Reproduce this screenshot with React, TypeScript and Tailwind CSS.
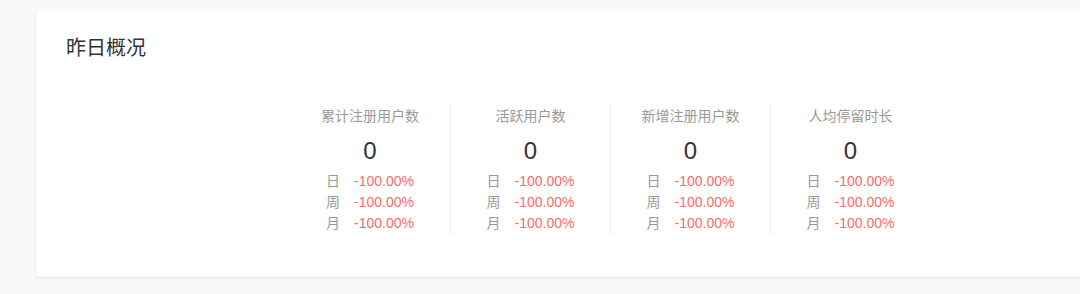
const FONT = "font-['Liberation_Sans','Noto_Sans_CJK_SC',sans-serif]"

const STATS = [
  { label: "累计注册用户数", value: "0" },
  { label: "活跃用户数", value: "0" },
  { label: "新增注册用户数", value: "0" },
  { label: "人均停留时长", value: "0" },
]

const PERIODS = ["日", "周", "月"]

function StatCol({ label, value, first }: { label: string; value: string; first: boolean }) {
  return (
    <div className={`w-[160px] flex flex-col items-center ${first ? "" : "border-l border-[#ebebeb]"}`}>
      <div className="text-[14px] leading-[22px] text-[#999]">{label}</div>
      <div className="mt-[8px] text-[24px] leading-[32px] text-[#333]">{value}</div>
      <div className="mt-[4px] flex flex-col">
        {PERIODS.map((p) => (
          <div key={p} className="flex items-center gap-[14px] text-[14px] leading-[21px]">
            <span className="text-[#999]">{p}</span>
            <span className="text-[#f56c6c]">-100.00%</span>
          </div>
        ))}
      </div>
    </div>
  )
}

export default function App() {
  return (
    <div className={`w-[1080px] h-[294px] overflow-hidden bg-[#f7f8fa] pt-[11px] pl-[36px] ${FONT}`}>
      <div className="w-[1148px] h-[266px] bg-white rounded-[4px] shadow-[0_1px_3px_rgba(0,0,0,0.08)]">
        <div className="pl-[30px] pt-[23px] text-[20px] leading-[28px] text-[#333]">昨日概况</div>
        <div className="mt-[43px] flex justify-center">
          {STATS.map((s, i) => (
            <StatCol key={s.label} label={s.label} value={s.value} first={i === 0} />
          ))}
        </div>
      </div>
    </div>
  )
}
